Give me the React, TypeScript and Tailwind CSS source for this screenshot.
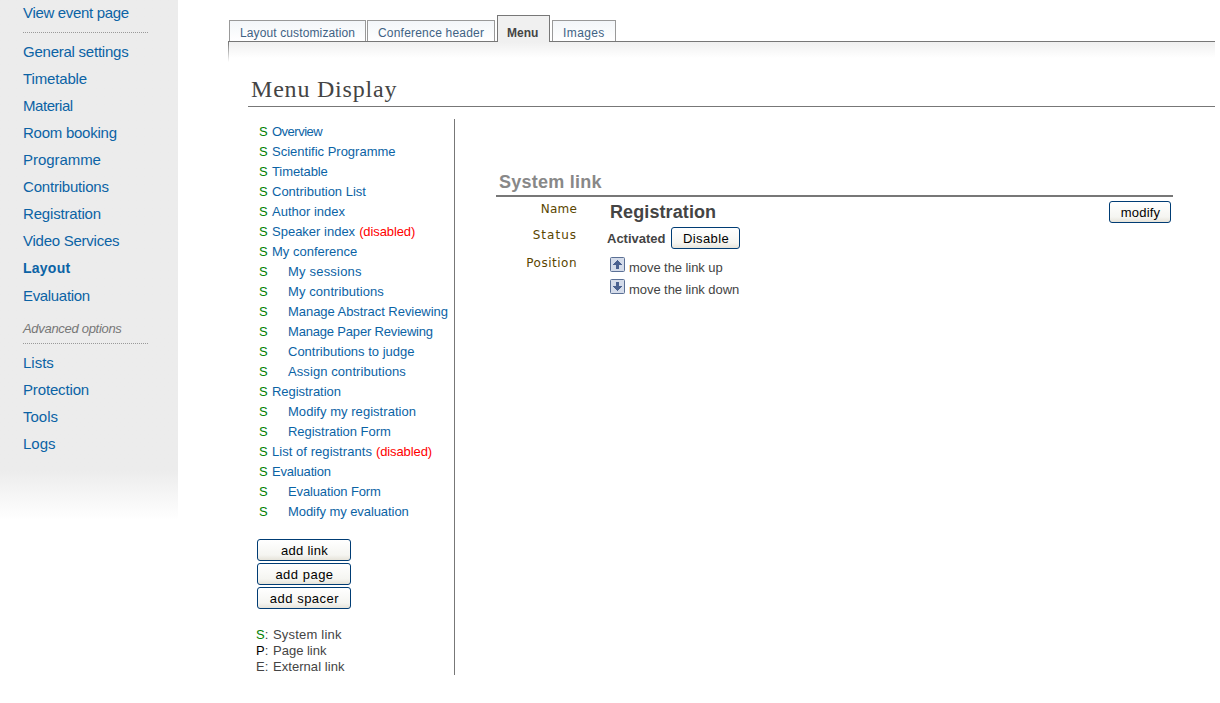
import React from "react";

type Item = { label: string; track?: string; sub?: boolean; disabled?: boolean };

const sideItems: Item[] = [
  { label: "General settings", track: "tracking-[-0.24px]" },
  { label: "Timetable", track: "tracking-[-0.15px]" },
  { label: "Material", track: "tracking-[-0.45px]" },
  { label: "Room booking", track: "tracking-[-0.25px]" },
  { label: "Programme", track: "tracking-[-0.05px]" },
  { label: "Contributions", track: "tracking-[-0.2px]" },
  { label: "Registration", track: "tracking-[-0.18px]" },
  { label: "Video Services", track: "tracking-[-0.25px]" },
];

const advancedItems: Item[] = [
  { label: "Lists" },
  { label: "Protection", track: "tracking-[-0.15px]" },
  { label: "Tools" },
  { label: "Logs" },
];

const menuItems: Item[] = [
  { label: "Overview", track: "tracking-[-0.5px]" },
  { label: "Scientific Programme" },
  { label: "Timetable", track: "tracking-[-0.1px]" },
  { label: "Contribution List" },
  { label: "Author index" },
  { label: "Speaker index", disabled: true },
  { label: "My conference" },
  { label: "My sessions", track: "tracking-[0.2px]", sub: true },
  { label: "My contributions", track: "tracking-[0.08px]", sub: true },
  { label: "Manage Abstract Reviewing", track: "tracking-[-0.05px]", sub: true },
  { label: "Manage Paper Reviewing", track: "tracking-[-0.18px]", sub: true },
  { label: "Contributions to judge", sub: true },
  { label: "Assign contributions", track: "tracking-[0.08px]", sub: true },
  { label: "Registration", track: "tracking-[-0.04px]" },
  { label: "Modify my registration", track: "tracking-[0.04px]", sub: true },
  { label: "Registration Form", track: "tracking-[-0.03px]", sub: true },
  { label: "List of registrants", track: "tracking-[0.05px]", disabled: true },
  { label: "Evaluation", track: "tracking-[-0.18px]" },
  { label: "Evaluation Form", track: "tracking-[-0.13px]", sub: true },
  { label: "Modify my evaluation", track: "tracking-[-0.07px]", sub: true },
];

function SideLink({ item }: { item: Item }) {
  return <a className={`block h-[27px] text-[15px] leading-[27px] ${item.track ?? ""}`}>{item.label}</a>;
}

function Button({ children, className }: { children: React.ReactNode; className: string }) {
  return (
    <button
      className={`block h-[22px] shrink-0 rounded-[3px] border border-[#003c74] bg-linear-to-b from-white via-[#f5f5f1] via-75% to-[#e6e3da] pt-px pl-px text-center text-[13px] leading-[19px] text-black ${className}`}
    >
      {children}
    </button>
  );
}

function Tab({ children, className }: { children: React.ReactNode; className: string }) {
  return (
    <div
      className={`h-[21px] border border-b-0 border-[#999] bg-linear-to-b from-[#f3f6f9] to-white pt-[5px] pl-[10px] text-[12px] leading-[14px] whitespace-nowrap text-[#3f6284] ${className}`}
    >
      {children}
    </div>
  );
}

function ArrowIcon({ down = false }: { down?: boolean }) {
  return (
    <svg width="15" height="15" viewBox="0 0 15 15" className="shrink-0">
      <rect x="0.5" y="0.5" width="14" height="14" rx="1" fill="#d5dcea" stroke="#5b7095" />
      <path
        d="M7 3h1v1h1v1h1v1h1v1h1v1H9v4H6V8H3V7h1V6h1V5h1V4h1z"
        fill="#4a6190"
        transform={down ? "rotate(180 7.5 7.5)" : undefined}
      />
    </svg>
  );
}

function Sidebar() {
  return (
    <aside className="h-[520px] w-[178px] shrink-0 bg-linear-to-b from-[#ececec] from-[470px] to-white pl-[23px] text-[#0b63a5]">
      <a className="block h-[25px] text-[15px] leading-[25px] tracking-[-0.33px]">View event page</a>
      <Dots />
      {sideItems.map((i) => (
        <SideLink key={i.label} item={i} />
      ))}
      <a className="block h-[28px] text-[14px] leading-[28px] font-bold tracking-[0.25px]">Layout</a>
      <SideLink item={{ label: "Evaluation", track: "tracking-[-0.33px]" }} />
      <div className="mt-3 text-[13px] leading-[15px] tracking-[-0.3px] text-[#777] italic">Advanced options</div>
      <Dots />
      {advancedItems.map((i) => (
        <SideLink key={i.label} item={i} />
      ))}
    </aside>
  );
}

function Dots() {
  return (
    <div className="mt-[7px] mb-[5px] h-px w-[125px] bg-[repeating-linear-gradient(90deg,#999_0_1px,transparent_1px_2px)]" />
  );
}

export default function App() {
  return (
    <div className="flex h-[703px] w-[1220px] overflow-hidden bg-white font-['Liberation_Sans',Arial,sans-serif] whitespace-nowrap">
      <Sidebar />
      <main className="ml-[50px] w-[987px]">
        <div className="flex h-[41px] items-end pl-px">
          <Tab className="w-[137px] tracking-[0.12px]">Layout customization</Tab>
          <Tab className="ml-px w-[128px] tracking-[0.2px]">Conference header</Tab>
          <div className="relative -mb-px ml-[2px] h-[27px] w-[53px] border border-b-0 border-[#777] bg-[#f0f0f0] pt-[10px] pl-[9px] text-[12px] leading-[14px] font-bold text-[#444]">
            Menu
          </div>
          <Tab className="ml-[2px] w-[64px] tracking-[0.4px]">Images</Tab>
        </div>
        <div className="flex h-[21px] border-t border-[#777]">
          <div className="h-5 w-px bg-linear-to-b from-[#777] to-white" />
          <div className="h-4 flex-1 bg-linear-to-b from-[#f0f0f0] to-white" />
        </div>
        <div className="ml-5">
          <h1 className="mt-[14px] h-[31px] border-b border-[#777] pl-[3px] font-['Liberation_Serif',serif] text-[24px] leading-[26px] tracking-[0.8px] text-[#444]">
            Menu Display
          </h1>
          <div className="mt-3 flex">
            <div className="h-[556px] w-[207px] shrink-0 border-r border-[#777] pt-[3px] text-[13px]">
              <ul>
                {menuItems.map((m) => (
                  <li key={m.label} className="flex h-5 pl-[11px] leading-[19px] text-[#0b63a5]">
                    <span className={`shrink-0 text-[#008000] ${m.sub ? "w-[29px]" : "w-[13px]"}`}>S</span>
                    <a className={m.track ?? ""}>{m.label}</a>
                    {m.disabled && <span className="ml-1 tracking-[-0.1px] text-[#f00]">(disabled)</span>}
                  </li>
                ))}
              </ul>
              <div className="mt-[17px] flex flex-col gap-[2px] pl-[9px]">
                <Button className="w-[94px] tracking-[0.3px]">add link</Button>
                <Button className="w-[94px] tracking-[0.5px]">add page</Button>
                <Button className="w-[94px] tracking-[0.5px]">add spacer</Button>
              </div>
              <div className="mt-[18px] pl-2 leading-[15px] text-[#444]">
                <div className="flex h-4">
                  <span className="w-[17px]"><span className="text-[#008000]">S</span>:</span>
                  <span className="tracking-[0.2px]">System link</span>
                </div>
                <div className="flex h-4">
                  <span className="w-[17px]"><span className="text-black">P</span>:</span>
                  <span>Page link</span>
                </div>
                <div className="flex h-4">
                  <span className="w-[17px]">E:</span>
                  <span className="tracking-[0.05px]">External link</span>
                </div>
              </div>
            </div>
            <section className="ml-[41px] w-[677px] pt-[53px] text-[13px] text-[#444]">
              <h2 className="h-[25px] border-b-2 border-[#777] pl-[3px] text-[18px] leading-[20px] font-bold tracking-[0.25px] text-[#888]">
                System link
              </h2>
              <div className="flex h-[30px]">
                <Label className="pt-[5px] tracking-[0.2px]">Name</Label>
                <div className="ml-[33px] flex-1 pt-[5px] text-[18px] leading-[20px] font-bold tracking-[0.1px]">Registration</div>
                <Button className="mt-1 mr-[2px] w-[62px] tracking-[0.2px]">modify</Button>
              </div>
              <div className="flex h-[27px]">
                <Label className="pt-px tracking-[1px]">Status</Label>
                <div className="ml-[30px] w-[64px] pt-1 leading-[15px] font-bold">Activated</div>
                <Button className="w-[69px] tracking-[0.4px]">Disable</Button>
              </div>
              <div className="flex">
                <Label className="pt-[2px] tracking-[0.5px]">Position</Label>
                <div className="ml-[33px] pt-[3px] leading-[15px] tracking-[-0.06px]">
                  <div className="flex h-[22px] gap-1">
                    <ArrowIcon />
                    <span className="pt-[3px]">move the link up</span>
                  </div>
                  <div className="flex h-[22px] gap-1">
                    <ArrowIcon down />
                    <span className="pt-[3px]">move the link down</span>
                  </div>
                </div>
              </div>
            </section>
          </div>
        </div>
      </main>
    </div>
  );
}

function Label({ children, className }: { children: React.ReactNode; className: string }) {
  return (
    <div
      className={`w-[81px] shrink-0 text-right font-['DejaVu_Sans',Verdana,sans-serif] text-[12px] leading-[14px] text-[#5a4500] ${className}`}
    >
      {children}
    </div>
  );
}
